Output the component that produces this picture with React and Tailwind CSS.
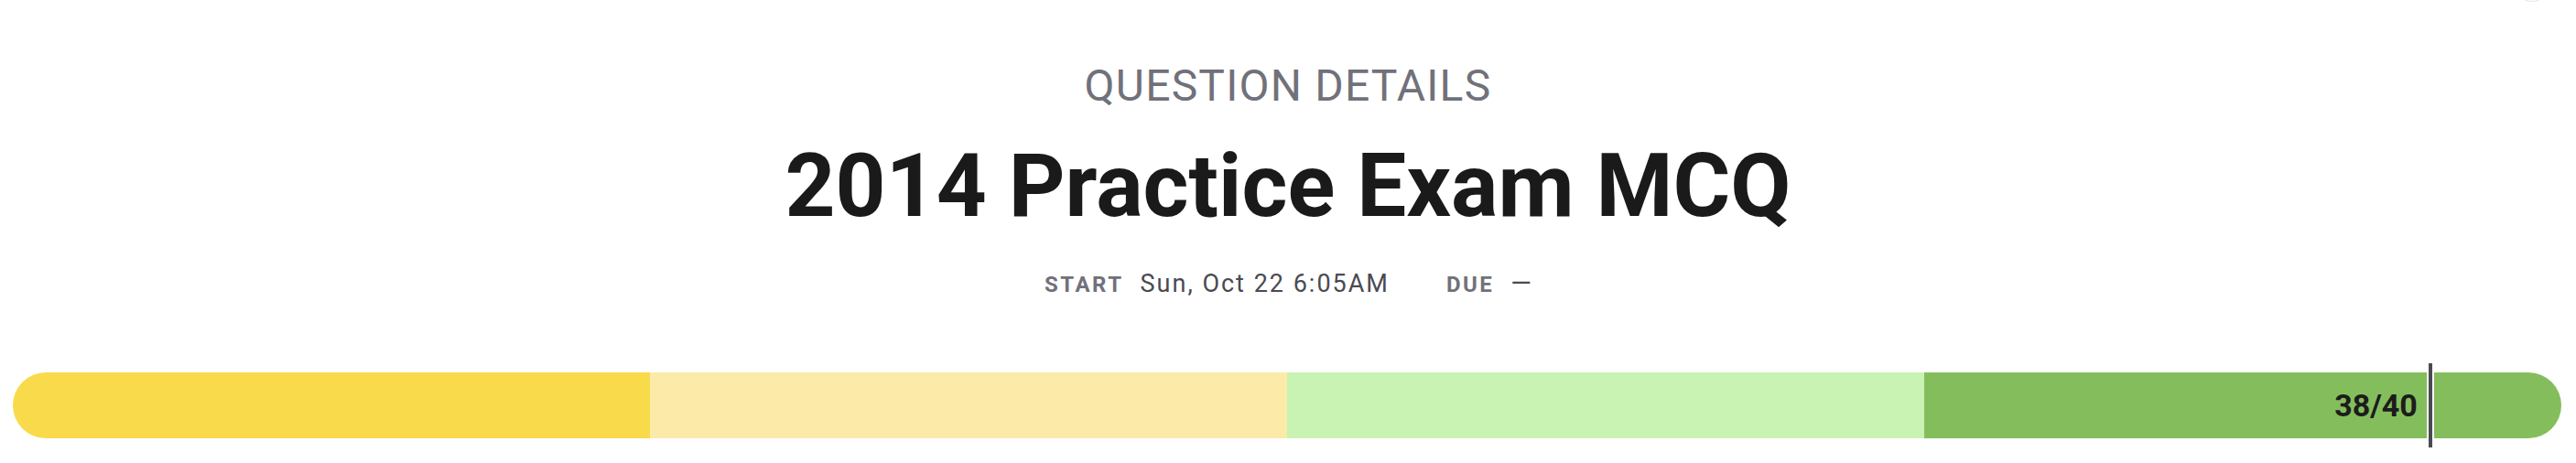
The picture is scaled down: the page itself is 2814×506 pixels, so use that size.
import React from 'react';

const segments = [
    { key: 'a', color: 'bg-[#f9da4b]' },
    { key: 'b', color: 'bg-[#fceba8]' },
    { key: 'c', color: 'bg-[#c8f3b3]' },
    { key: 'd', color: 'bg-[#84be5c]' },
];

const ScoreBar = ({ score, total }) => {
    const pct = (score / total) * 100;
    return (
        <div className="relative ml-[14px] mr-[16px] h-[72px]">
            <div className="flex h-full overflow-hidden rounded-full">
                {segments.map((s) => (
                    <div key={s.key} className={`flex-1 ${s.color}`} />
                ))}
            </div>

            {/* score label sits just left of the marker */}
            <span
                className="absolute top-0 flex h-full items-center text-[34px] font-bold leading-none text-[#1c1c1c]"
                style={{ right: `calc(${100 - pct}% + 18px)` }}
            >
                {score}/{total}
            </span>

            {/* marker */}
            <div
                className="absolute top-[-10px] bottom-[-10px] w-[8px] -translate-x-1/2 border-x-2 border-white bg-[#4a4a52]"
                style={{ left: `calc(${pct}% - 4px)` }}
            />
        </div>
    );
};

export default function App() {
    return (
        <div className="relative w-full bg-white font-['Roboto',sans-serif]" style={{ height: 506 }}>
            {/* faint edge of a control cut off above the page */}
            <div className="absolute top-[-40px] left-[2746px] h-[42px] w-[40px] rounded-full border border-[#e6e6e6]" />

            <div className="flex flex-col items-center pt-[70px]">
                <div className="text-[48px] leading-[48px] tracking-[0.025em] text-[#71717a]">QUESTION DETAILS</div>
                <h1 className="mt-[35px] text-[96px] font-bold leading-[100px] text-[#1a1a1a]">2014 Practice Exam MCQ</h1>
                <div className="mt-[40px] flex items-baseline leading-[32px]">
                    <span className="text-[24px] font-bold tracking-[2.5px] text-[#71717a]">START</span>
                    <span className="ml-[18px] text-[27px] tracking-[2px] text-[#4a4a52]">Sun, Oct 22 6:05AM</span>
                    <span className="ml-[62px] text-[24px] font-bold tracking-[2.5px] text-[#71717a]">DUE</span>
                    <span className="ml-[18px] text-[29px] text-[#4a4a52]">—</span>
                </div>
            </div>

            <div className="mt-[80px]">
                <ScoreBar score={38} total={40} />
            </div>
        </div>
    );
}
